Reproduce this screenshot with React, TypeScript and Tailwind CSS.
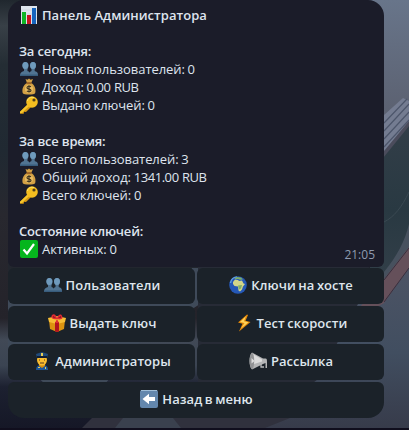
import type { ReactNode } from "react";

type IconName = "chart" | "users" | "money" | "key" | "check" | "globe" | "gift" | "bolt" | "officer" | "horn" | "back";

const drawings: Record<IconName, ReactNode> = {
  chart: (
    <>
      <path fill="#dfe5ee" d="M1 0h16v18H1z" />
      <path stroke="#c3cbd6" strokeWidth=".5" d="M1 4h16M1 8h16M1 12h16" />
      <path fill="#10b526" d="M2 6h4v12H2z" />
      <path fill="#c51420" d="M7 9h4v9H7z" />
      <path fill="#1764bd" d="M12 2h4v16h-4z" />
    </>
  ),
  users: (
    <>
      <path fill="#517492" d="M0 16c0-3 1-4 4-5V9C1.600 6 2 2 5.500 2S9.500 6 7.500 9v2c2 .6 2.500 2 2.500 5z" />
      <path fill="#517492" d="M9 16c0-3 0-4 2.500-5V9c-2-3-2-7 1.500-7s4 4 1.700 7v2c3 1 3.300 2 3.300 5z" />
      <ellipse cx="5.300" cy="5.500" rx="2.900" ry="3.600" fill="#6f9abc" />
      <ellipse cx="13" cy="5.500" rx="2.900" ry="3.600" fill="#6f9abc" />
      <path fill="#385c7c" d="M0 14.500h18V16H0z" />
    </>
  ),
  money: (
    <>
      <path fill="#d3a044" d="M5.500 1l2 .8L9 .5l1.600 1.200L13 1l-1.800 4c3.500 2 5 6 4 10-.4 2-12 2-12.500 0-1-4 .7-8 4.300-10z" />
      <path fill="#8f5520" d="M6.500 4.300h5v1.500h-5z" />
      <circle cx="9" cy="11" r="4" fill="#e9bd62" />
      <path d="M11 8.800C9.600 7.600 7 8.200 7 9.700c0 2 4 .8 4 2.700 0 1.500-2.700 1.800-4.200.5M9 7.200v7.400" fill="none" stroke="#423620" strokeWidth="1.200" />
    </>
  ),
  key: (
    <>
      <path fill="#d99a12" d="M8 8l3 3-5 5-2-.2-.3 2H0v-2z" />
      <path fill="#f5c52c" d="M8.200 8l1.500 1.500L2 17H0v-1.200z" />
      <circle cx="12" cy="6" r="5.800" fill="#f4bd20" />
      <path fill="none" stroke="#ffe268" d="M7.500 5C8 1.800 11 .7 14 1.700" />
      <circle cx="14" cy="4" r="1.600" fill="#514019" />
    </>
  ),
  check: (
    <>
      <rect width="18" height="18" rx="2" fill="#05b51d" />
      <path d="M3.500 9.500L7 13.500 14 4" fill="none" stroke="#fff" strokeWidth="2.200" />
    </>
  ),
  globe: (
    <>
      <circle cx="9" cy="9" r="8.800" fill="#2558b7" />
      <path d="M1.500 7C2 3 5 1 8 1" stroke="#5e9ce0" strokeWidth="1.500" fill="none" />
      <path fill="#d3d68a" d="M4 6l2-2.500 3 .5 1 1 3-.5 1.500 3L16 8l-2 2.500-1 3-2 2-1.500-1-.5-4-3.500-.5L4 8z" />
      <path fill="#7fae68" d="M5 3l3-2 4 .5 2 2-3 .3L9 3zM9 9.500l4-.5-1 3.500-2 1z" />
    </>
  ),
  gift: (
    <>
      <path fill="#dc9410" d="M1 6l8 2 8-2-1 9-7 3-7-3z" />
      <path fill="#f6bd35" d="M0 4l9-2 9 2-1 4-8 2-8-2z" />
      <path fill="#b3151e" d="M7 8h4v9.500l-2 .5-2-.5z" />
      <path fill="#e02b32" d="M9 5C5 6 2 4 4 1c2-2 4 0 5 3 1-3 4-5 5-2 2 3-2 4-5 3l2 4H7z" />
      <path fill="#781720" d="M5 2l3 2-3-.4zM13 2l-3 2 3-.3z" />
    </>
  ),
  bolt: (
    <>
      <path fill="#e88a08" d="M12 .5L3 8.500l4.500 1.300L4 17.500 15.500 8l-5-1.300L13 1z" />
      <path fill="#ffd45a" d="M11 2L5 8l4.500 1L6 14.500 13.500 8.300 9 7.200z" />
    </>
  ),
  officer: (
    <>
      <path fill="#1c569a" d="M3 18c0-4 2-5 6-5s6 1 6 5z" />
      <path fill="#d68f10" d="M6 10h6v4l-3 2-3-2z" />
      <ellipse cx="9" cy="8" rx="5" ry="5.500" fill="#f9bd30" />
      <path fill="#214b7c" d="M3 2l6-2 6 2-1 4H4z" />
      <path fill="#101e35" d="M4 4h10v2H4z" />
      <path fill="#e8cc54" d="M8 1h2v3H8z" />
      <path stroke="#553a20" d="M6 8h1M11 8h1M7 11h4" />
      <path fill="#e8cc54" d="M5 15h2v1H5zM12 15h1v2h-1z" />
    </>
  ),
  horn: (
    <>
      <path d="M12 10.500v4.500h3" stroke="#b9bbbc" strokeWidth="1.300" fill="none" />
      <path fill="#b4b5b6" d="M3 .5L14 6.500h2.500c1.500 0 1.500 1.500 1.500 4V16h-1.500v-5L14 12 3 17.500C-.5 14-.5 4 3 .5z" />
      <path fill="#dcdcdc" d="M4 2l9 5.500v2L5 12z" />
      <ellipse cx="3" cy="9" rx="2.200" ry="8" fill="#929395" />
      <path fill="#dedede" d="M2.500 6l3 3-3 2.500z" />
    </>
  ),
  back: (
    <>
      <rect width="18" height="18" rx="2" fill="#6387ad" />
      <path stroke="#9fbdd7" d="M1 .5h16" />
      <path fill="#fff" d="M2.500 9L9 3.800V7h6v4H9v3.300z" />
    </>
  ),
};

function Icon({ name }: { name: IconName }) {
  return <svg viewBox="0 0 18 18" className="size-[18px] shrink-0" aria-hidden="true">{drawings[name]}</svg>;
}

function Stat({ icon, label, value }: { icon: IconName; label: string; value: string }) {
  return (
    <div className="flex h-[18px] items-center gap-[4px]">
      <Icon name={icon} />
      <span className="tracking-[-0.06px] [word-spacing:-0.6px]">{label}: <span className="tracking-[-0.43px] [word-spacing:0.4px]">{value}</span></span>
    </div>
  );
}

function Heading({ children }: { children: ReactNode }) {
  return <h2 className="mt-[18px] -ml-px font-semibold tracking-[-0.18px]">{children}</h2>;
}

function Key({ icon, children, className = "rounded-[6px]" }: { icon: IconName; children: ReactNode; className?: string }) {
  return (
    <button className={`flex h-9 min-w-0 items-center justify-center gap-[4px] bg-[#1b2229] pb-[2px] pl-px font-semibold text-[#dfe6ed] ${className}`}>
      <Icon name={icon} /><span className="tracking-[0.05px] [word-spacing:-0.9px]">{children}</span>
    </button>
  );
}

function Wallpaper() {
  return (
    <svg className="absolute inset-0 size-full" viewBox="0 0 409 430" preserveAspectRatio="none" aria-hidden="true">
      <defs>
        <linearGradient id="left" x2="0" y2="1"><stop stopColor="#20272e" /><stop offset=".06" stopColor="#384047" /><stop offset=".15" stopColor="#242d34" /><stop offset=".35" stopColor="#202932" /><stop offset=".5" stopColor="#28282f" /><stop offset=".74" stopColor="#24232a" /><stop offset=".79" stopColor="#414956" /><stop offset=".85" stopColor="#3b4452" /><stop offset=".9" stopColor="#1c2030" /><stop offset="1" stopColor="#151726" /></linearGradient>
        <linearGradient id="right" x2="0" y2="1"><stop stopColor="#68758a" /><stop offset=".25" stopColor="#5c6272" /><stop offset=".65" stopColor="#4b5364" /><stop offset=".82" stopColor="#414e60" /><stop offset="1" stopColor="#373b4a" /></linearGradient>
        <linearGradient id="cloth" x2="0" y2="1"><stop stopColor="#323e48" /><stop offset=".5" stopColor="#293942" /><stop offset="1" stopColor="#34404a" /></linearGradient>
      </defs>
      <path fill="url(#left)" d="M0 0h210v430H0z" />
      <path fill="url(#right)" d="M200 0h209v430H200z" />
      <path fill="#22262e" d="M8 256h376v22H8z" />
      <path fill="#3f4a59" d="M8 300h172l12-32h8v36l-62 40-33 40H45L8 350z" />
      <path fill="#272b36" d="M198 264h172l-12 40-40 75-60 47h-60z" />
      <path fill="#747c91" d="M384 115l19-17 6 3v24l-25 34z" />
      <path stroke="#4d566b" strokeWidth="1.200" d="M384 123l23-24M384 131l25-27M384 139l25-27M384 147l25-27" />
      <path fill="#4b4c5c" d="M384 151l25-30v8l-25 30z" />
      <path fill="url(#cloth)" d="M370 174l39-48v121l-39 47z" />
      <path stroke="#3a4952" d="M384 222c10-5 18-15 25-30" fill="none" />
      <path fill="#47515e" d="M409 224c-4 17-12 32-25 48v9l25-33z" />
      <path fill="#65505a" d="M409 247l-25 32-24 28-8 3h20l12-7 25-35z" />
      <path stroke="#382f3e" d="M409 248l-25 32M409 268l-25 34" />
      <path fill="#30313d" d="M100 410h210l-50 20H80z" />
      <path fill="#3a414e" d="M123 418h50l8 10h-66z" />
      <path fill="#100e1d" d="M0 428h409v2H0z" />
    </svg>
  );
}

export default function App() {
  return (
    <main className="relative h-[430px] w-[409px] overflow-hidden bg-[#242a34] font-['Open_Sans',sans-serif] text-[13px] leading-[18px] text-[#dfe4ee]">
      <Wallpaper />
      <div className="relative ml-2 w-[376px]">
        <section className="relative h-[267px] rounded-t-[16px] rounded-b-[6px] bg-[#1b1c29] pt-[6px] pl-[12px]">
          <h1 className="flex h-[18px] items-center gap-[4px] font-semibold"><Icon name="chart" /><span className="tracking-[0.04px]">Панель Администратора</span></h1>
          <Heading>За сегодня:</Heading>
          <Stat icon="users" label="Новых пользователей" value="0" />
          <Stat icon="money" label="Доход" value="0.00 RUB" />
          <Stat icon="key" label="Выдано ключей" value="0" />
          <Heading>За все время:</Heading>
          <Stat icon="users" label="Всего пользователей" value="3" />
          <Stat icon="money" label="Общий доход" value="1341.00 RUB" />
          <Stat icon="key" label="Всего ключей" value="0" />
          <Heading>Состояние ключей:</Heading>
          <Stat icon="check" label="Активных" value="0" />
          <time className="absolute right-[9px] bottom-[3px] text-[12px] text-[#8e9bb0]">21:05</time>
        </section>
        <nav className="mt-px grid grid-cols-2 gap-[2px]">
          <Key icon="users">Пользователи</Key>
          <Key icon="globe">Ключи на хосте</Key>
          <Key icon="gift">Выдать ключ</Key>
          <Key icon="bolt">Тест скорости</Key>
          <Key icon="officer">Администраторы</Key>
          <Key icon="horn">Рассылка</Key>
          <Key icon="back" className="col-span-2 rounded-t-[6px] rounded-b-[16px]">Назад в меню</Key>
        </nav>
      </div>
    </main>
  );
}
